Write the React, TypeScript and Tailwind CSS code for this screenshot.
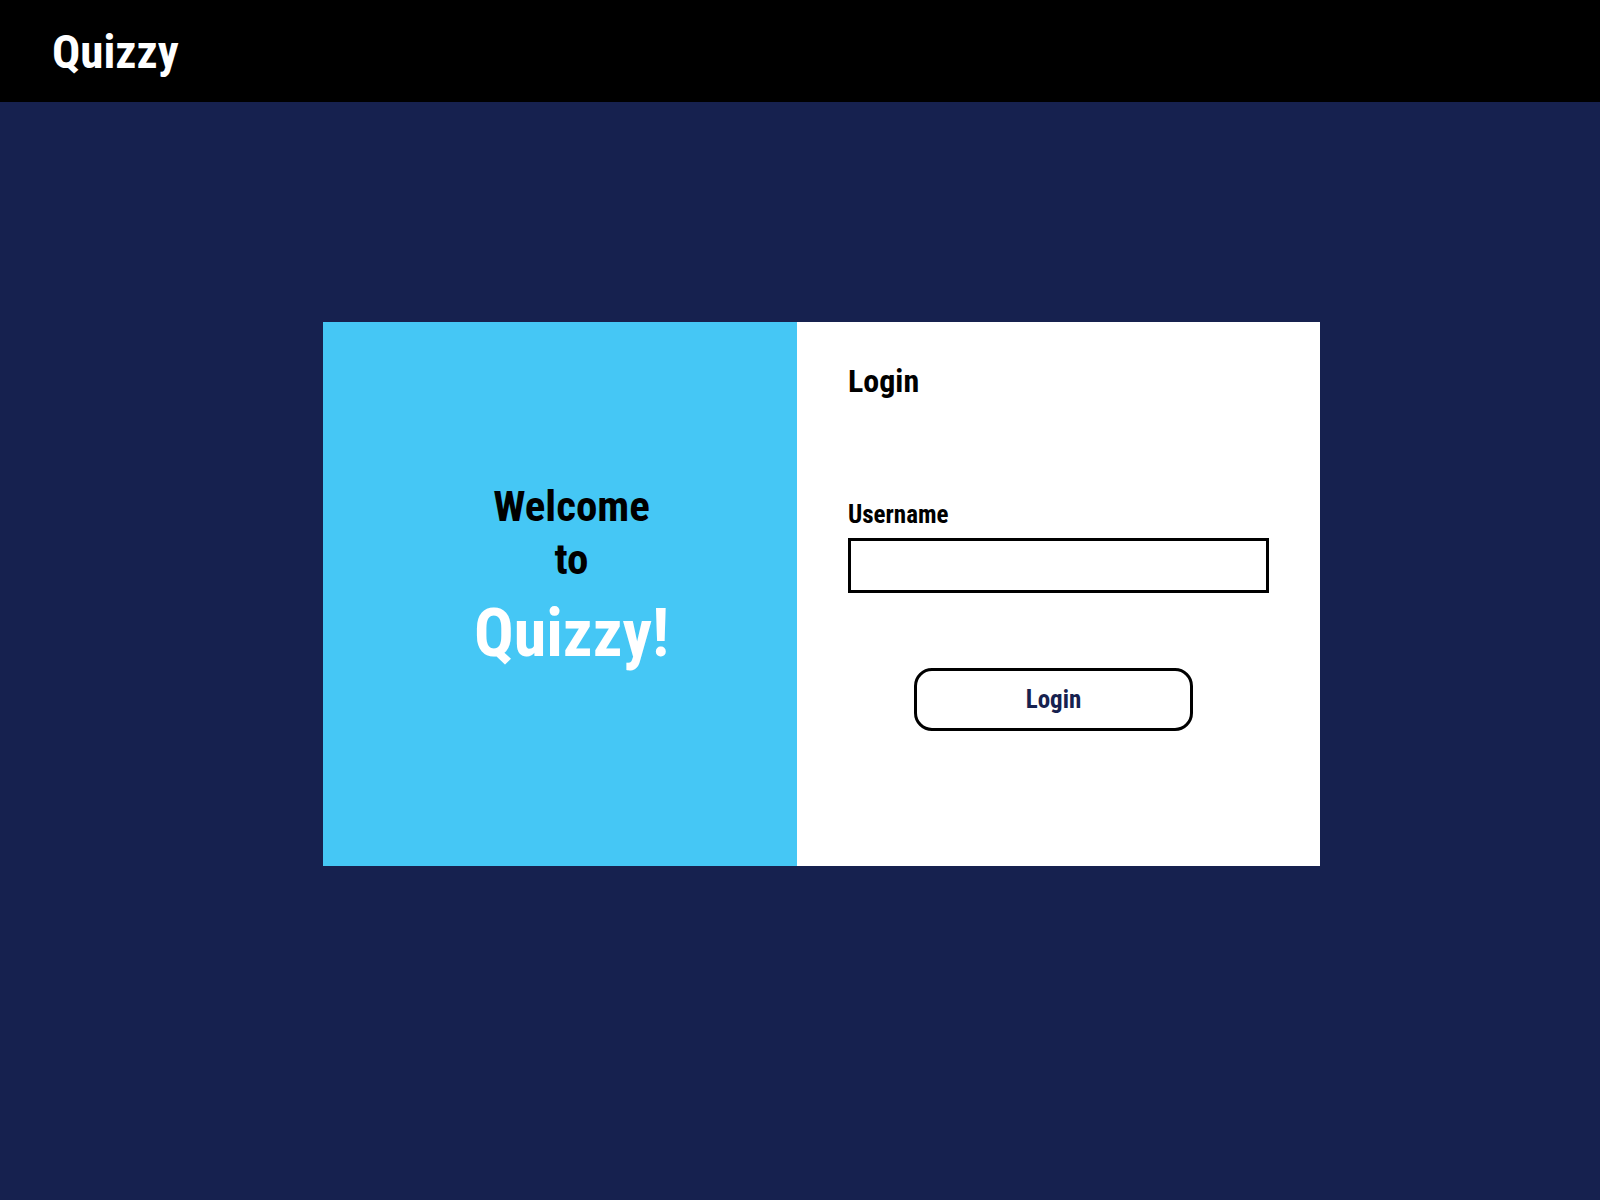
import React, { useState } from 'react';

// Roboto squeezed to its narrowest width stands in for the condensed face
const FONT = "font-['Roboto','Liberation_Sans',sans-serif] [font-stretch:75%]";

const Header: React.FC = () => (
  <header className="flex h-[102px] items-center bg-black pl-[52px]">
    <span className="text-[47px] font-bold leading-none text-white">Quizzy</span>
  </header>
);

const WelcomePanel: React.FC = () => (
  <div className="flex w-[474px] flex-col items-center bg-[#45c7f5] pl-[23px] pt-[163px] text-center font-bold">
    <span className="text-[43px] leading-none text-black">Welcome</span>
    <span className="mt-[10px] text-[43px] leading-none text-black">to</span>
    <span className="mt-[20px] text-[66px] leading-none text-white">Quizzy!</span>
  </div>
);

const LoginPanel: React.FC = () => {
  const [username, setUsername] = useState('');

  return (
    <div className="flex w-[523px] flex-col bg-white pl-[51px] pt-[43px]">
      <h1 className="text-[32px] font-bold leading-none text-black">Login</h1>
      <label htmlFor="username" className="mt-[105px] text-[25px] font-bold leading-none text-black">
        Username
      </label>
      <input
        id="username"
        value={username}
        onChange={(e) => setUsername(e.target.value)}
        className="mt-[11px] h-[55px] w-[421px] border-[3px] border-black bg-white px-3 text-[20px] outline-none"
      />
      <button className="ml-[66px] mt-[75px] flex h-[63px] w-[279px] items-center justify-center rounded-[18px] border-[3px] border-black bg-white text-[25px] font-bold leading-none text-[#16214f]">
        Login
      </button>
    </div>
  );
};

export default function App() {
  return (
    <div className={`min-h-[1200px] bg-[#16214f] ${FONT}`}>
      <Header />
      <main className="pl-[323px] pt-[220px]">
        <div className="flex h-[544px] w-[997px]">
          <WelcomePanel />
          <LoginPanel />
        </div>
      </main>
    </div>
  );
}
